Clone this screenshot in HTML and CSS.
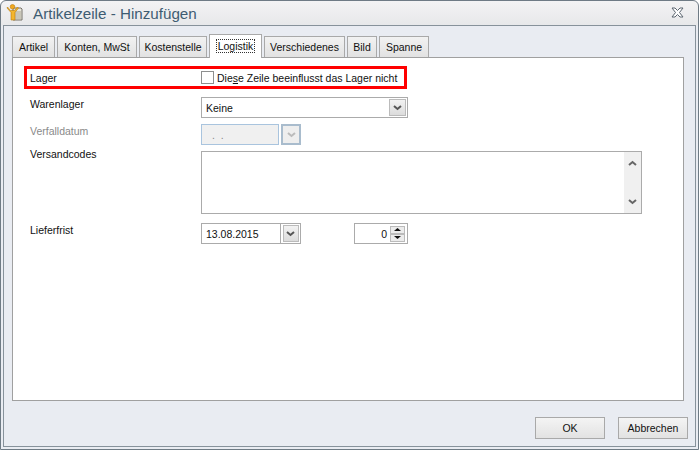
FILE: index.html
```html
<!DOCTYPE html>
<html lang="de">
<head>
    <meta charset="UTF-8">
    <meta name="viewport" content="width=device-width, initial-scale=1.0">
    <title>Artikelzeile - Hinzufügen</title>
    <link rel="stylesheet" href="styles.css">
</head>
<body>

    <div class="window">
        <div class="titlebar">
            <svg class="title-icon" width="20" height="20" viewBox="0 0 20 20">
                <path d="M8 5h7l1 1v11H7V6z" fill="#e8e6dc" stroke="#77736a"/>
                <path d="M8 8h7v8H8z" fill="#c9c6b8"/>
                <circle cx="6.5" cy="3.8" r="2.3" fill="#f2a91e" stroke="#b87a0c" stroke-width=".6"/>
                <path d="M1.5 4l3 3.500h4l3-3.500 1 1-3.500 4.500V17H5V9.500L1 5z" fill="#f4b62c" stroke="#b87a0c" stroke-width=".6"/>
            </svg>
            <span class="title-text">Artikelzeile - Hinzufügen</span>
            <svg class="close-icon" width="13" height="11" viewBox="0 0 13 11">
                <path d="M1 1h3l2.500 2.500L9 1h3L8.500 5.500 12 10H9L6.500 7.500 4 10H1l3.500-4.500z" fill="#fff" stroke="#5c6670"/>
            </svg>
        </div>

        <div class="client">
            <div class="tabs">
                <div class="tab tab-artikel">Artikel</div>
                <div class="tab tab-konten">Konten, MwSt</div>
                <div class="tab tab-kosten">Kostenstelle</div>
                <div class="tab tab-logistik active"><span class="focus">Logistik</span></div>
                <div class="tab tab-versch">Verschiedenes</div>
                <div class="tab tab-bild">Bild</div>
                <div class="tab tab-spanne">Spanne</div>
            </div>

            <div class="panel">
                <div class="row row-lager">
                    <div class="row-label">Lager</div>
                    <span class="checkbox"></span>
                    <span class="check-text">Die<u>s</u>e Zeile beeinflusst das Lager nicht</span>
                </div>

                <div class="row row-warenlager">
                    <div class="row-label">Warenlager</div>
                    <div class="field select">
                        <span class="field-text">Keine</span>
                        <span class="drop-btn"><svg width="9" height="6" viewBox="0 0 9 6"><path d="M1 1l3.500 3L8 1" fill="none" stroke="#555" stroke-width="2"/></svg></span>
                    </div>
                </div>

                <div class="row row-verfall disabled">
                    <div class="row-label">Verfalldatum</div>
                    <div class="field date-disabled"><span class="field-text">. &nbsp;.</span></div>
                    <span class="date-btn date-btn-disabled"><svg width="9" height="6" viewBox="0 0 9 6"><path d="M1 1l3.500 3L8 1" fill="none" stroke="#bbb" stroke-width="2"/></svg></span>
                </div>

                <div class="row row-versand">
                    <div class="row-label label-up">Versandcodes</div>
                    <div class="field memo">
                        <div class="memo-scroll">
                            <svg width="9" height="6" viewBox="0 0 9 6"><path d="M1 5l3.500-3L8 5" fill="none" stroke="#666" stroke-width="2"/></svg>
                            <svg width="9" height="6" viewBox="0 0 9 6"><path d="M1 1l3.500 3L8 1" fill="none" stroke="#666" stroke-width="2"/></svg>
                        </div>
                    </div>
                </div>

                <div class="row row-liefer">
                    <div class="row-label">Lieferfrist</div>
                    <div class="field date"><span class="field-text">13.08.2015</span></div>
                    <span class="date-btn"><span class="date-btn-inner"><svg width="9" height="6" viewBox="0 0 9 6"><path d="M1 1l3.500 3L8 1" fill="none" stroke="#555" stroke-width="2"/></svg></span></span>
                    <div class="field spinner">
                        <span class="spin-value">0</span>
                        <div class="spin-btns">
                            <span class="spin-btn"><svg width="7" height="3" viewBox="0 0 7 4" preserveAspectRatio="none"><path d="M3.500 0L7 4H0z" fill="#111"/></svg></span>
                            <span class="spin-btn"><svg width="7" height="3" viewBox="0 0 7 4" preserveAspectRatio="none"><path d="M0 0h7L3.500 4z" fill="#111"/></svg></span>
                        </div>
                    </div>
                </div>
            </div>

            <div class="footer">
                <button class="btn">OK</button>
                <button class="btn">Abbrechen</button>
            </div>
        </div>
    </div>

</body>
</html>
```

FILE: styles.css
```css
body {
    margin: 0;
    background-color: #fff;
    font-family: "Liberation Sans", Arial, sans-serif;
    font-size: 10.500px;
    color: #111;
}

.window {
    display: flex;
    flex-direction: column;
    box-sizing: border-box;
    width: 699px;
    height: 450px;
    padding: 0 2px 2px;
    border: 1px solid #6f7b85;
    border-radius: 6px 6px 0 0;
    background: linear-gradient(#f3f3f4, #e7e8ea 24px, #e9ecf2 25px);
}

.titlebar {
    display: flex;
    align-items: center;
    flex: none;
    height: 24px;
}

.title-icon {
    margin-left: 3px;
}

.title-text {
    margin-left: 7px;
    font-size: 15.200px;
    color: #3e5c72;
}

.close-icon {
    margin-left: auto;
    margin-right: 12px;
    margin-top: -1px;
}

.client {
    flex: 1;
    padding: 8px 11px 0 8px;
    border: 1px solid #87929b;
    background-color: #e9ecf2;
}

/* tabs */
.tabs {
    display: flex;
    height: 23px;
}

.tab {
    box-sizing: border-box;
    height: 21px;
    margin-top: 2px;
    margin-right: 2px;
    border: 1px solid #a9a9a9;
    border-bottom: none;
    background: linear-gradient(#f2f2f2, #e2e2e2);
    line-height: 20px;
    text-align: center;
    white-space: nowrap;
}

.tab-artikel { width: 43px; }
.tab-konten { width: 80px; }
.tab-kosten { width: 68px; }
.tab-logistik { width: 53px; }
.tab-versch { width: 81px; }
.tab-bild { width: 30px; }
.tab-spanne { width: 50px; }

.tab.active {
    position: relative;
    z-index: 1;
    height: 24px;
    margin-top: 0;
    background: #fff;
    line-height: 22px;
}

.focus {
    padding: 1px 2px;
    outline: 1px dotted #333;
    outline-offset: -1px;
}

/* form */
.panel {
    box-sizing: border-box;
    height: 344px;
    padding-top: 8px;
    border: 1px solid #a0a0a0;
    background-color: #fff;
}

.row {
    display: flex;
    margin-left: 17px;
    height: 21px;
}

.row-label {
    flex: none;
    width: 171px;
    line-height: 14px;
}

.row-lager {
    box-sizing: border-box;
    align-items: center;
    width: 383px;
    height: 23px;
    margin-left: 11px;
    padding-left: 3px;
    border: 3px solid #f00;
}

.row-warenlager { margin-top: 8px; }
.row-verfall { margin-top: 6px; }
.row-versand { margin-top: 6px; height: 63px; }
.row-liefer { margin-top: 9px; }

.disabled .row-label {
    color: #8a8a8a;
}

.label-up {
    margin-top: -4px;
}

.checkbox {
    flex: none;
    box-sizing: border-box;
    width: 13px;
    height: 13px;
    border: 1px solid #8e8f8f;
    background-color: #fff;
}

.check-text {
    margin-left: 3px;
    white-space: nowrap;
}

.field {
    display: flex;
    align-items: center;
    box-sizing: border-box;
    height: 21px;
    border: 1px solid #ababab;
    background-color: #fff;
}

.field-text {
    padding-left: 4px;
}

.select {
    justify-content: space-between;
    width: 207px;
}

.drop-btn {
    display: flex;
    align-items: center;
    justify-content: center;
    width: 15px;
    height: 15px;
    margin-right: 1px;
    border: 1px solid #bbb;
    background: linear-gradient(#f2f2f2, #dcdcdc);
}

.date {
    width: 80px;
}

.date-disabled {
    width: 78px;
    margin-right: 2px;
    border: 1px solid #a9c4de;
    background-color: #f0f0f0;
    color: #888;
}

.date-disabled .field-text {
    padding-left: 10px;
}

.date-btn {
    display: flex;
    align-items: center;
    justify-content: center;
    box-sizing: border-box;
    width: 20px;
    height: 21px;
    border: 1px solid #ababab;
    border-left: none;
    background-color: #fff;
}

.date-btn-inner {
    display: flex;
    align-items: center;
    justify-content: center;
    box-sizing: border-box;
    width: 16px;
    height: 17px;
    border: 1px solid #bbb;
    background: linear-gradient(#f2f2f2, #dcdcdc);
}

.date-btn-disabled {
    border: 2px solid #a9bccd;
    background-color: #eee;
}

.memo {
    justify-content: flex-end;
    align-items: stretch;
    width: 441px;
    height: 63px;
}

.memo-scroll {
    display: flex;
    flex-direction: column;
    align-items: center;
    justify-content: space-between;
    box-sizing: border-box;
    width: 17px;
    padding: 8px 0;
    background-color: #f0f0f0;
}

.spinner {
    width: 54px;
    margin-left: 53px;
}

.spin-value {
    flex: 1;
    padding-right: 3px;
    text-align: right;
}

.spin-btns {
    display: flex;
    flex-direction: column;
    width: 15px;
    margin-right: 2px;
}

.spin-btn {
    display: flex;
    align-items: center;
    justify-content: center;
    box-sizing: border-box;
    height: 8px;
    border: 1px solid #bbb;
    background-color: #ececec;
}

/* footer */
.footer {
    display: flex;
    justify-content: flex-end;
    gap: 13px;
    margin-top: 16px;
    margin-right: -4px;
}

.btn {
    box-sizing: border-box;
    width: 70px;
    height: 22px;
    padding: 0;
    border: 1px solid #a9a9a9;
    background: linear-gradient(#f4f4f4, #e2e2e2);
    font-family: inherit;
    font-size: 10.500px;
    color: #111;
}
```
